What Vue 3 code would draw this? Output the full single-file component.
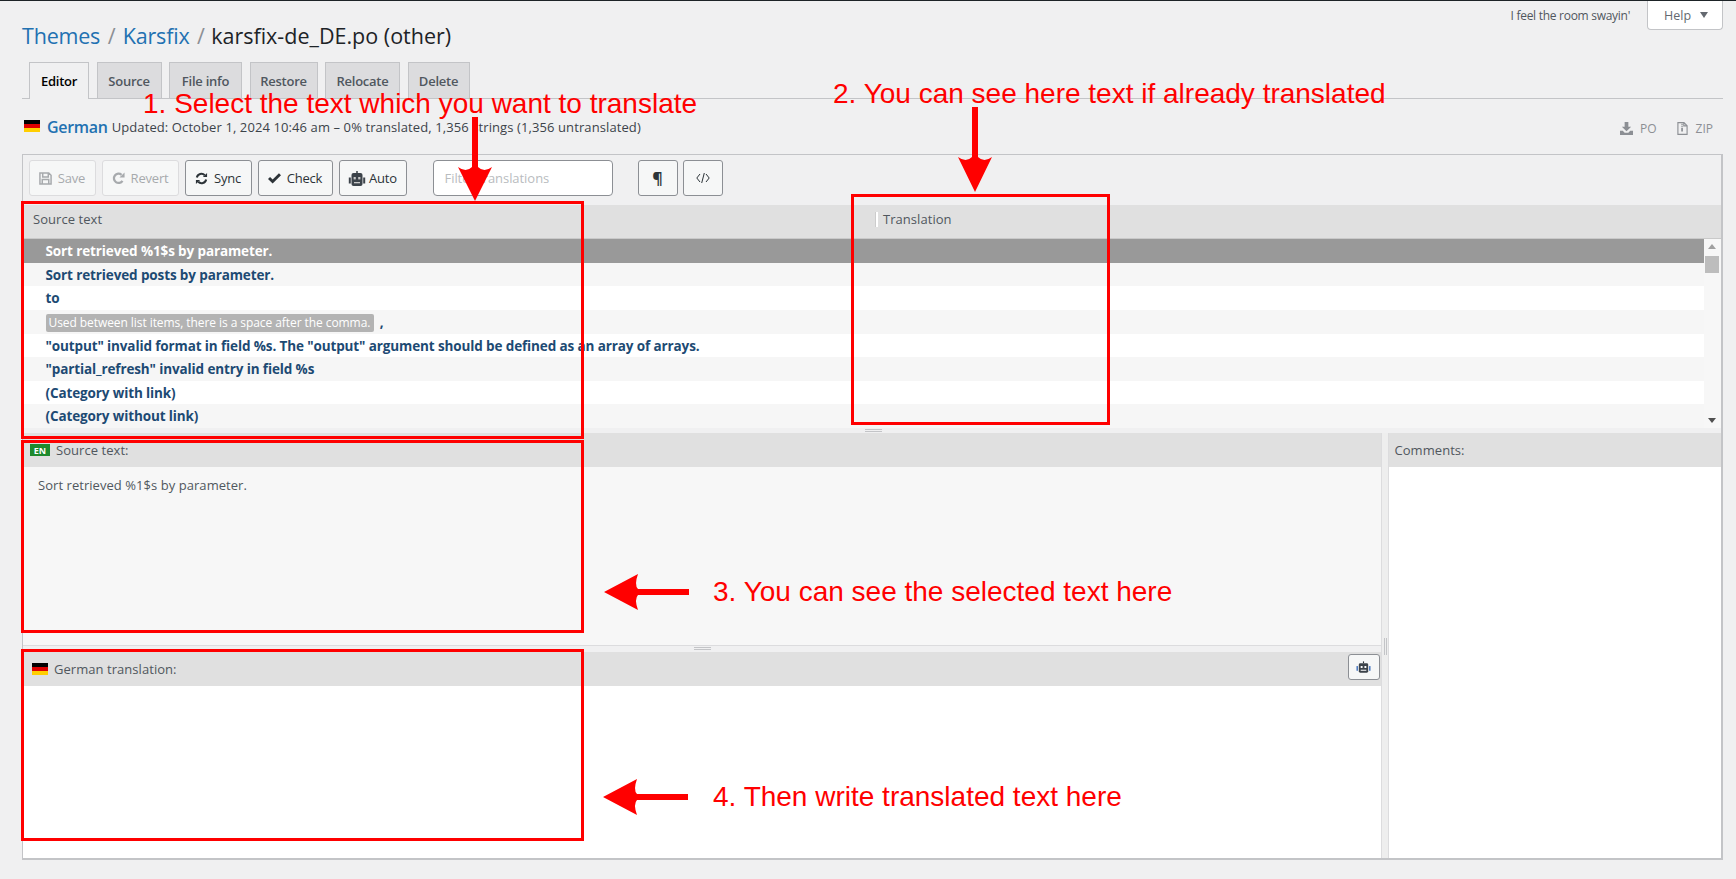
<script setup>
const rows = [
  'Sort retrieved %1$s by parameter.',
  'Sort retrieved posts by parameter.',
  'to',
  null,
  '"output" invalid format in field %s. The "output" argument should be defined as an array of arrays.',
  '"partial_refresh" invalid entry in field %s',
  '(Category with link)',
  '(Category without link)',
]
const tabs = ['Editor', 'Source', 'File info', 'Restore', 'Relocate', 'Delete']
const boxes = [
  { cls: 'b1' }, { cls: 'b2' }, { cls: 'b3' }, { cls: 'b4' },
]
</script>

<template>
  <div class="page">
    <header class="head">
      <h1 class="title">
        <a>Themes</a><span class="sep">/</span><a>Karsfix</a><span class="sep s2">/</span><span class="cur">karsfix-de_DE.po (other)</span>
      </h1>
      <div class="meta-links">
        <span class="lyric">I feel the room swayin'</span>
        <span class="help">Help <i class="tri"></i></span>
      </div>
    </header>

    <nav class="tabs">
      <a v-for="(t, i) in tabs" :key="t" class="tab" :class="{ active: i === 0 }">{{ t }}</a>
    </nav>

    <div class="info">
      <span class="flag big"><i></i><i></i><i></i></span>
      <span class="lang">German</span>
      <span class="stats">Updated: October 1, 2024 10:46 am – 0% translated, 1,356 strings (1,356 untranslated)</span>
      <span class="dl">
        <svg class="dlicon" viewBox="0 0 14 14"><path d="M5 0h4v5h3L7 10 2 5h3zM0 9.500h3l2 2h4l2-2h3V14H0z" fill="#8c8f94"/></svg>
        <span>PO</span>
        <svg class="dlicon zip" viewBox="0 0 12 15"><path d="M.7.700h7l3.600 3.600v10H.7zM7.500.700v3.800h3.800" fill="none" stroke="#8c8f94" stroke-width="1.300"/><path d="M4.500 2h2v1.300h-2zM4.500 4.200h2v1.300h-2zM4.500 6.500h2V11h-2z" fill="#8c8f94"/></svg>
        <span>ZIP</span>
      </span>
    </div>

    <section class="editor">
      <div class="toolbar">
        <button class="btn off s-save">
          <svg viewBox="0 0 14 14"><path d="M1 1h9.500L13 3.500V13H1zM4 1.500v4h6v-4M3.500 13V8h7v5" fill="none" stroke="#a7aaad" stroke-width="1.600"/></svg>
          Save
        </button>
        <button class="btn off s-revert">
          <svg viewBox="0 0 14 14"><path d="M11.300 9.500A5 5 0 1 1 10.300 3" fill="none" stroke="#a7aaad" stroke-width="2.400"/><path d="M8 6h5.500V.5z" fill="#a7aaad"/></svg>
          Revert
        </button>
        <button class="btn s-sync">
          <svg viewBox="0 0 14 14"><path d="M2 6a5 5 0 0 1 8.500-2.500M12 8a5 5 0 0 1-8.500 2.500" fill="none" stroke="#2c3338" stroke-width="2.200"/><path d="M8.500 5.500H13V1zM5.500 8.500H1V13z" fill="#2c3338"/></svg>
          Sync
        </button>
        <button class="btn s-check">
          <svg viewBox="0 0 14 14"><path d="M0 7.500 2.200 5.300 5 8.100 11.800 1.300 14 3.500 5 12.500z" fill="#2c3338"/></svg>
          Check
        </button>
        <button class="btn s-auto">
          <svg class="robot" viewBox="0 0 18 15"><path d="M8.300 0h1.400v2.500H8.300z" fill="#2c3338"/><rect x="3.500" y="2" width="11" height="13" rx="2" fill="#3c434a"/><rect x="0.800" y="6.500" width="2" height="6" fill="#3c434a"/><rect x="15.200" y="6.500" width="2" height="6" fill="#3c434a"/><rect x="5.600" y="6" width="2.200" height="2.400" fill="#c9c9c9"/><rect x="10.200" y="6" width="2.200" height="2.400" fill="#c9c9c9"/><path d="M6 11h6v1.300H6z" fill="#c9c9c9"/></svg>
          Auto
        </button>
        <div class="filter">Filter translations</div>
        <button class="btn s-para"><b>¶</b></button>
        <button class="btn s-code"><svg viewBox="0 0 14 12"><path d="M4 2 .8 6 4 10M10 2l3.200 4L10 10M8.300 1 5.700 11" fill="none" stroke="#2c3338" stroke-width="1"/></svg></button>
      </div>

      <div class="thead">
        <span class="th-src">Source text</span>
        <span class="th-trans">Translation</span>
      </div>

      <div class="listwrap">
        <div class="list">
          <div v-for="(r, i) in rows" :key="i" class="row" :class="{ sel: i === 0, odd: i % 2 === 1 }">
            <template v-if="r">{{ r }}</template>
            <template v-else><span class="ctx">Used between list items, there is a space after the comma.</span> <span class="comma">,</span></template>
          </div>
        </div>
        <div class="scroll">
          <i class="up"></i>
          <i class="thumb"></i>
          <i class="down"></i>
        </div>
      </div>

      <div class="hgrip main"><i></i></div>

      <div class="lower">
        <div class="left">
          <div class="phead">
            <span class="badge">EN</span>
            <span>Source text:</span>
          </div>
          <div class="srcbody">Sort retrieved %1$s by parameter.</div>
          <div class="hgrip second"><i></i></div>
          <div class="phead tr">
            <span class="flag"><i></i><i></i><i></i></span>
            <span>German translation:</span>
            <button class="botbtn">
              <svg viewBox="0 0 16 12"><path d="M7.400 0h1.200v2h-1.200z" fill="#2c3338"/><rect x="3" y="2" width="10" height="10" rx="1.500" fill="#3c434a"/><rect x="0.500" y="5" width="1.600" height="5" fill="#4a78c0"/><rect x="13.900" y="5" width="1.600" height="5" fill="#4a78c0"/><path d="M5 5h2v2H5zM9 5h2v2H9zM5 9h6v1H5z" fill="#fff"/></svg>
            </button>
          </div>
          <div class="trbody"></div>
        </div>
        <div class="gutter"><i></i></div>
        <div class="right">
          <div class="phead">Comments:</div>
          <div class="trbody"></div>
        </div>
      </div>
    </section>

    <!-- Red annotation overlay -->
    <div class="note n1">1. Select the text which you want to translate</div>
    <div class="note n2">2. You can see here text if already translated</div>
    <div class="note n3">3. You can see the selected text here</div>
    <div class="note n4">4. Then write translated text here</div>
    <div v-for="b in boxes" :key="b.cls" class="rbox" :class="b.cls"></div>

    <svg class="arrow a1" viewBox="0 0 34 84"><path d="M14 0h6v50q6 6 14 0L17 84 0 50q8 6 14 0z" fill="#f00"/></svg>
    <svg class="arrow a2" viewBox="0 0 34 85"><path d="M14 0h6v50q6 6 14 0L17 85 0 50q8 6 14 0z" fill="#f00"/></svg>
    <svg class="arrow a3" viewBox="0 0 85 36"><path d="M85 15v6H34q-4 4 0 15L0 18 34 0q-4 11 0 15z" fill="#f00"/></svg>
    <svg class="arrow a4" viewBox="0 0 85 36"><path d="M85 15v6H34q-4 4 0 15L0 18 34 0q-4 11 0 15z" fill="#f00"/></svg>
  </div>
</template>

<style>
html, body { margin: 0; background: #f0f0f1; }
</style>

<style scoped>
.page {
  position: relative;
  box-sizing: border-box;
  width: 1736px;
  height: 879px;
  overflow: hidden;
  padding: 0 13px 0 22px;
  border-top: 1px solid #1d2327;
  background: #f0f0f1;
  color: #3c434a;
  font-family: "Open Sans", "Noto Sans", sans-serif;
  font-size: 13px;
}
.head { display: flex; justify-content: space-between; height: 61px; }
.title { margin: 21px 0 0; font-size: 21.500px; line-height: 28px; font-weight: 400; color: #1d2327; letter-spacing: -.2px; white-space: nowrap; }
.title a { color: #2271b1; }
.cur { letter-spacing: 0; }
.sep { color: #8c8f94; margin: 0 7.500px; }
.sep.s2 { margin-right: 6.500px; }
.meta-links { display: flex; align-items: flex-start; }
.lyric { font-size: 12px; line-height: 14px; margin-top: 8px; margin-right: 17px; color: #50575e; letter-spacing: -.28px; }
.help { display: flex; align-items: center; box-sizing: border-box; width: 76px; height: 29px; padding-left: 16px; background: #fff; border: 1px solid #c3c4c7; border-top: 0; border-radius: 0 0 4px 4px; font-size: 12.500px; color: #646970; }
.tri { width: 0; height: 0; margin-left: 9px; border: 4px solid transparent; border-top: 6px solid #646970; border-bottom: 0; }

.tabs { display: flex; gap: 7.500px; height: 36px; padding-left: 7px; border-bottom: 1px solid #c3c4c7; box-sizing: content-box; }
.tab { box-sizing: border-box; height: 36px; border: 1px solid #c3c4c7; border-bottom: 0; background: #dcdcde; display: flex; align-items: center; justify-content: center; font-size: 13px; font-weight: 600; color: #50575e; letter-spacing: -.25px; }
.tab:nth-child(1) { width: 60px; height: 37px; background: #f0f0f1; color: #000; position: relative; z-index: 1; }
.tab:nth-child(2) { width: 65px; }
.tab:nth-child(3) { width: 73px; }
.tab:nth-child(4) { width: 68px; }
.tab:nth-child(5) { width: 75px; }
.tab:nth-child(6) { width: 62px; }

.info { display: flex; align-items: center; height: 55px; padding: 0 10px 0 2px; }
.flag { display: inline-flex; flex-direction: column; width: 16px; height: 12px; flex: none; }
.flag i { flex: 1; background: #000; }
.flag i:nth-child(2) { background: #d00; }
.flag i:nth-child(3) { background: #ffce00; }
.flag.big { margin-right: 7px; margin-top: -1px; }
.lang { font-size: 16px; color: #2271b1; font-weight: 600; letter-spacing: -.3px; margin-right: 4px; }
.stats { font-size: 13px; color: #3c434a; letter-spacing: .1px; }
.dl { margin-left: auto; display: flex; align-items: center; color: #8c8f94; font-size: 12px; margin-top: 3px; }
.dlicon { width: 13px; height: 13px; margin-right: 7px; }
.dlicon.zip { margin-left: 19px; }

.editor { box-sizing: border-box; height: 706px; border: 1px solid #c3c4c7; border-bottom-width: 2px; border-right-width: 2px; display: flex; flex-direction: column; }
.toolbar { display: flex; align-items: flex-start; height: 50px; flex: none; padding: 5px 0 0 5.500px; box-sizing: border-box; }
.btn { box-sizing: border-box; height: 36px; display: inline-flex; align-items: center; justify-content: center; gap: 6px; border: 1px solid #8c8f94; border-radius: 3px; background: #f6f7f7; color: #2c3338; font: inherit; font-size: 13px; letter-spacing: -.2px; padding: 0; }
.btn svg { width: 13px; height: 13px; }
.btn svg.robot { width: 18px; height: 15px; }
.btn.off { border-color: #dcdcde; color: #a7aaad; }
.s-save { width: 67px; margin-right: 6px; }
.s-revert { width: 77px; margin-right: 6px; }
.s-sync { width: 67px; margin-right: 6px; }
.s-check { width: 75px; margin-right: 6px; }
.s-auto { width: 68px; margin-right: 26px; gap: 3px; }
.filter { box-sizing: border-box; width: 180px; height: 36px; margin-right: 25px; display: flex; align-items: center; padding-left: 11px; background: #fff; border: 1px solid #8c8f94; border-radius: 4px; color: #b9bcc0; font-size: 13px; letter-spacing: -.05px; }
.s-para { width: 40px; margin-right: 5px; font-size: 16px; }
.s-code { width: 40px; }
.s-code svg { width: 14px; height: 12px; }

.thead { display: flex; height: 34px; flex: none; align-items: center; padding-bottom: 5px; box-sizing: border-box; background: #e0e0e0; border-bottom: 1px solid #c9c9c9; font-size: 13px; letter-spacing: .05px; color: #50575e; }
.th-src { margin-left: 10px; width: 843px; }
.th-trans { padding-left: 5px; border-left: 2px solid #fff; box-shadow: -1px 0 #ccc; line-height: 15px; }

.listwrap { display: flex; height: 189px; flex: none; }
.list { flex: 1; background: #fff; }
.row { box-sizing: border-box; height: 23.650px; line-height: 24px; padding-left: 22.500px; font-size: 13.500px; font-weight: 700; letter-spacing: -.12px; color: #1d4a73; white-space: nowrap; background: #fff; }
.row.odd { background: #f6f6f6; }
.row.sel { background: #999; color: #fff; }
.ctx { display: inline-block; height: 18px; line-height: 18px; padding: 0 4px 0 3px; background: #b3b3b3; color: #fff; border-radius: 2px; font-size: 12px; font-weight: 400; letter-spacing: -.07px; vertical-align: 0; }
.comma { margin-left: 2px; }
.scroll { position: relative; width: 17px; background: #f7f7f7; }
.scroll i { position: absolute; display: block; }
.thumb { left: 1px; top: 17px; width: 14px; height: 17px; background: #bdbdbd; }
.up, .down { left: 4px; width: 0; height: 0; border: 4px solid transparent; }
.up { top: 5px; border-bottom: 5px solid #a0a0a0; border-top: 0; }
.down { bottom: 5px; border-top: 5px solid #505050; border-bottom: 0; }

.hgrip { height: 5px; flex: none; position: relative; background: #f0f0f1; }
.hgrip i { position: absolute; top: 1px; width: 17px; height: 3px; box-sizing: border-box; border-top: 1px solid #c3c4c7; border-bottom: 1px solid #c3c4c7; }
.hgrip.main i { left: 842px; }
.hgrip.second { height: 7px; border-top: 1px solid #dcdcde; box-sizing: border-box; }
.hgrip.second i { left: 671px; top: 1px; }

.lower { flex: 1; display: flex; min-height: 0; }
.left, .right { display: flex; flex-direction: column; min-height: 0; }
.left { width: 1357.500px; flex: none; border-right: 1px solid #dcdcde; }
.right { flex: 1; }
.phead { position: relative; display: flex; align-items: center; gap: 6px; height: 34px; flex: none; padding-left: 7px; background: #e0e0e0; font-size: 13px; letter-spacing: .05px; color: #50575e; }
.right .phead { padding-left: 6px; }
.phead.tr { padding-left: 9px; }
.badge { width: 20px; height: 12px; display: flex; align-items: center; justify-content: center; background: #1e8a2e; color: #fff; font-size: 9px; font-weight: 700; letter-spacing: 0; }
.srcbody { height: 178px; flex: none; box-sizing: border-box; padding: 9px 15px; background: #f7f7f7; font-size: 13px; line-height: 18px; letter-spacing: .05px; color: #50575e; }
.trbody { flex: 1; background: #fff; }
.botbtn { position: absolute; right: 1px; top: 2px; box-sizing: border-box; width: 32px; height: 26px; display: flex; align-items: center; justify-content: center; padding: 0; border: 1px solid #8c8f94; border-radius: 3px; background: #f6f7f7; }
.botbtn svg { width: 15px; height: 12px; }
.gutter { position: relative; width: 7px; flex: none; background: #eee; border-right: 1px solid #dcdcde; box-sizing: border-box; }
.gutter i { position: absolute; left: 2px; top: 205px; width: 3px; height: 17px; box-sizing: border-box; border-left: 1px solid #c3c4c7; border-right: 1px solid #c3c4c7; }

.note { position: absolute; font-family: "Liberation Sans", Arial, sans-serif; font-size: 28px; line-height: 32px; color: #f00; white-space: nowrap; }
.n1 { left: 143px; top: 87px; }
.n2 { left: 833px; top: 77px; }
.n3 { left: 713px; top: 575px; }
.n4 { left: 713px; top: 780px; }

.rbox { position: absolute; box-sizing: border-box; border: 3px solid #f00; }
.b1 { left: 21px; top: 200px; width: 563px; height: 238px; }
.b2 { left: 851px; top: 193px; width: 259px; height: 231px; }
.b3 { left: 21px; top: 439px; width: 563px; height: 193px; }
.b4 { left: 21px; top: 648px; width: 563px; height: 192px; }

.arrow { position: absolute; }
.a1 { left: 458px; top: 116px; width: 34px; height: 84px; }
.a2 { left: 958px; top: 106px; width: 34px; height: 85px; }
.a3 { left: 604px; top: 573px; width: 85px; height: 36px; }
.a4 { left: 603px; top: 778px; width: 85px; height: 36px; }
</style>
